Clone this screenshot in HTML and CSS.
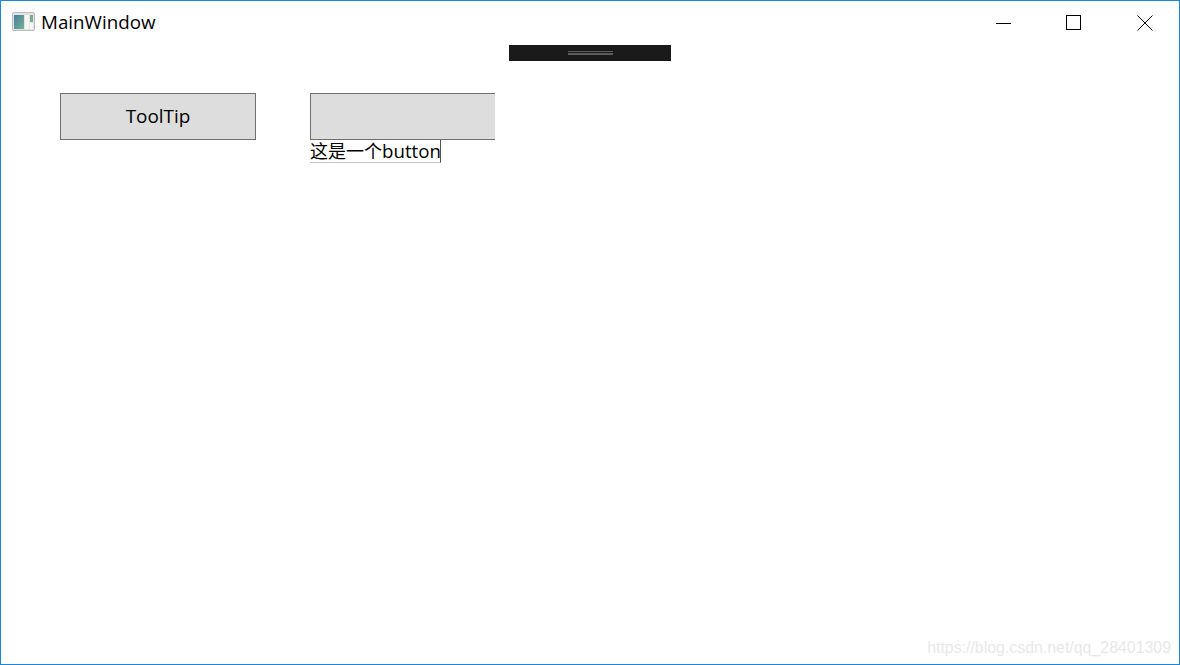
FILE: index.html
```html
<!DOCTYPE html>
<html lang="zh-CN">
<head>
    <meta charset="UTF-8">
    <title>MainWindow</title>
    <link rel="stylesheet" href="styles.css">
</head>
<body>
    <div class="window">
        <div class="titlebar">
            <div class="title">
                <svg class="app-icon" width="24" height="20" viewBox="0 0 24 20">
                    <defs>
                        <linearGradient id="panel" x1="0" y1="0" x2="1" y2="1">
                            <stop offset="0" stop-color="#4a7fa3"/>
                            <stop offset="1" stop-color="#74b08c"/>
                        </linearGradient>
                    </defs>
                    <rect x="0.5" y="0.5" width="22" height="18" rx="1.5" fill="#e2e4e6" stroke="#bcbcbc"/>
                    <rect x="2" y="3" width="10" height="14" fill="url(#panel)"/>
                    <rect x="13" y="3" width="4" height="14" fill="#f4f6f4"/>
                    <rect x="18" y="3" width="3" height="7" fill="#7fa894"/>
                    <rect x="18" y="11" width="3" height="6" fill="#f4f6f4"/>
                </svg>
                <span>MainWindow</span>
            </div>
            <div class="window-btns">
                <svg width="16" height="16" viewBox="0 0 16 16"><path d="M1 8.5H16" stroke="#000" fill="none"/></svg>
                <svg width="16" height="16" viewBox="0 0 16 16"><rect x="0.5" y="0.5" width="14" height="14" stroke="#000" fill="none"/></svg>
                <svg width="16" height="16" viewBox="0 0 16 16"><path d="M0.5 0.5L15.5 15.5M15.5 0.5L0.5 15.5" stroke="#000" fill="none"/></svg>
            </div>
        </div>

        <div class="grip-row">
            <div class="grip"></div>
        </div>

        <div class="content">
            <button class="btn btn-first">ToolTip</button>
            <div class="popup-wrap">
                <button class="btn btn-open"></button>
                <div class="tooltip">这是一个<span class="tooltip-latin">button</span></div>
            </div>
        </div>

        <div class="watermark">https://blog.csdn.net/qq_28401309</div>
    </div>
</body>
</html>
```

FILE: styles.css
```css
* {
    box-sizing: border-box;
}

html, body {
    margin: 0;
    padding: 0;
    height: 100%;
    background: #fff;
}

.window {
    position: relative;
    height: 665px;
    border: 1px solid #1a86d9;
    background: #fff;
    color: #000;
    font-family: "Open Sans", "Noto Sans CJK SC", sans-serif;
    overflow: hidden;
}

.titlebar {
    display: flex;
    align-items: center;
    justify-content: space-between;
    height: 43px;
    padding: 0 26px 0 11px;
}

.title {
    display: flex;
    align-items: center;
    gap: 5px;
    font-size: 18.8px;
    line-height: 24px;
    margin-top: -1px;
}

.window-btns {
    display: flex;
    gap: 55px;
}

.grip-row {
    display: flex;
    justify-content: center;
    height: 17px;
    padding-top: 1px;
}

.grip {
    width: 162px;
    height: 16px;
    background: #1a1a1a linear-gradient(#5c5c5c, #5c5c5c) center / 45px 4px no-repeat;
    position: relative;
}

.grip::after {
    content: "";
    position: absolute;
    left: 59px;
    right: 58px;
    top: 7px;
    height: 1px;
    background: #1a1a1a;
}

.content {
    display: flex;
    gap: 54px;
    padding: 32px 0 0 59px;
}

.btn {
    height: 47px;
    padding: 0 0 2px;
    border: 1px solid #707070;
    background: #dddddd;
    color: #000;
    font-family: inherit;
    font-size: 18.9px;
}

.btn-first {
    width: 196px;
}

.popup-wrap {
    position: relative;
    width: 185px;
}

.btn-open {
    display: block;
    width: 185px;
    border-right: none;
}

.tooltip {
    position: absolute;
    left: 0;
    top: 47px;
    width: 131px;
    height: 23px;
    border-right: 1px solid #555;
    border-bottom: 1px solid #c8c8c8;
    background: #fff;
    font-size: 18px;
    line-height: 22px;
    white-space: nowrap;
}

.tooltip-latin {
    font-size: 18.7px;
}

.watermark {
    position: absolute;
    right: 8px;
    bottom: 7px;
    color: #e8e8e8;
    font-family: "Liberation Sans", sans-serif;
    font-size: 15.9px;
}
```
